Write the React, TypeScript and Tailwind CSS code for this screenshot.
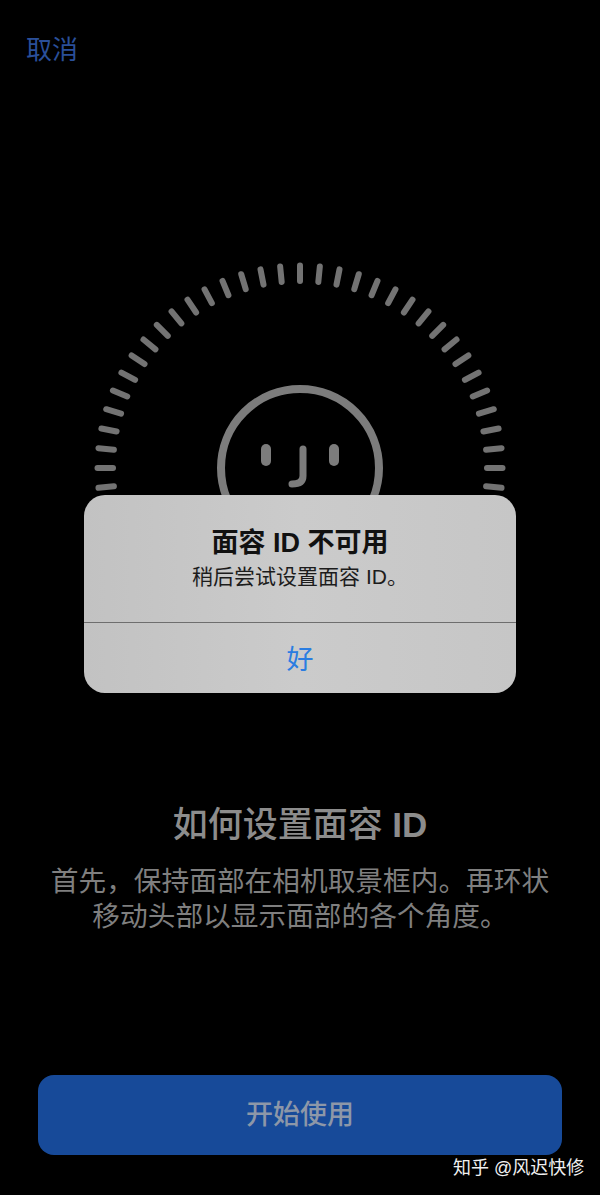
import React from 'react';

const font = { fontFamily: '"Liberation Sans", "Noto Sans CJK SC", sans-serif' };

const CX = 210;
const CY = 210;
const ticks = Array.from({ length: 35 }, (_, i) => (i - 1) * 5.625);

function FaceRing() {
  return (
    <svg width="420" height="240" viewBox="0 0 420 240" fill="none" className="block">
      {ticks.map((deg) => {
        const a = (deg * Math.PI) / 180;
        const x1 = CX - Math.cos(a) * 187;
        const y1 = CY - Math.sin(a) * 187;
        const x2 = CX - Math.cos(a) * 202.5;
        const y2 = CY - Math.sin(a) * 202.5;
        return <line key={deg} x1={x1} y1={y1} x2={x2} y2={y2} stroke="#737373" strokeWidth="6" strokeLinecap="round" />;
      })}
      <circle cx={CX} cy={CY} r="79" stroke="#7c7c7c" strokeWidth="8" />
      <line x1={CX - 34} y1={CY - 19} x2={CX - 34} y2={CY - 7} stroke="#7c7c7c" strokeWidth="10" strokeLinecap="round" />
      <line x1={CX + 34} y1={CY - 19} x2={CX + 34} y2={CY - 7} stroke="#7c7c7c" strokeWidth="10" strokeLinecap="round" />
      <path d={`M${CX + 3} ${CY - 19} V${CY + 8} Q${CX + 3} ${CY + 16} ${CX - 8} ${CY + 16}`} stroke="#7c7c7c" strokeWidth="7" strokeLinecap="round" />
    </svg>
  );
}

export default function App() {
  return (
    <div style={font} className="relative flex h-[1195px] w-[600px] flex-col overflow-hidden bg-black">
      <div className="h-[100px] pl-[26px] pt-[31px] text-[26px] leading-[38px] text-[#2a4f99]">取消</div>

      <div className="mt-[158px] flex h-[240px] justify-center">
        <FaceRing />
      </div>

      <h1 className="mt-[303px] text-center text-[35px] font-medium leading-[48px] text-[#8c8c8c]">
        如何设置面容 <span className="font-bold">ID</span>
      </h1>
      <p className="mt-[15px] text-center text-[27.7px] leading-[35px] text-[#7f7f7f]">
        首先，保持面部在相机取景框内。再环状
        <br />
        移动头部以显示面部的各个角度。
      </p>

      <button className="mx-[38px] mt-[141px] flex h-[80px] w-[524px] items-center justify-center rounded-[16px] bg-[#174a99] pt-[1px] text-[27px] font-medium text-[#8d97a8]">
        开始使用
      </button>

      {/* alert over the ring */}
      <div className="absolute left-[84px] top-[495px] flex h-[198px] w-[432px] flex-col rounded-[21px] bg-gradient-to-r from-[#c2c2c2] via-[#cbcbcb] to-[#c6c6c6]">
        <div className="flex h-[128px] flex-col items-center border-b border-[#6e6e6e] pt-[29px]">
          <div className="text-[27px] font-bold leading-[38px] text-[#111111]">面容 ID 不可用</div>
          <div className="text-[21px] leading-[30px] text-[#1c1c1c]">稍后尝试设置面容 ID。</div>
        </div>
        <div className="flex flex-1 items-center justify-center pt-[4px] text-[27px] text-[#2a7de1]">好</div>
      </div>

      {/* watermark */}
      <div className="absolute left-[453px] top-[1155px] text-[18px] leading-[26px] text-[#f0f0f0]">知乎 @风迟快修</div>
    </div>
  );
}
